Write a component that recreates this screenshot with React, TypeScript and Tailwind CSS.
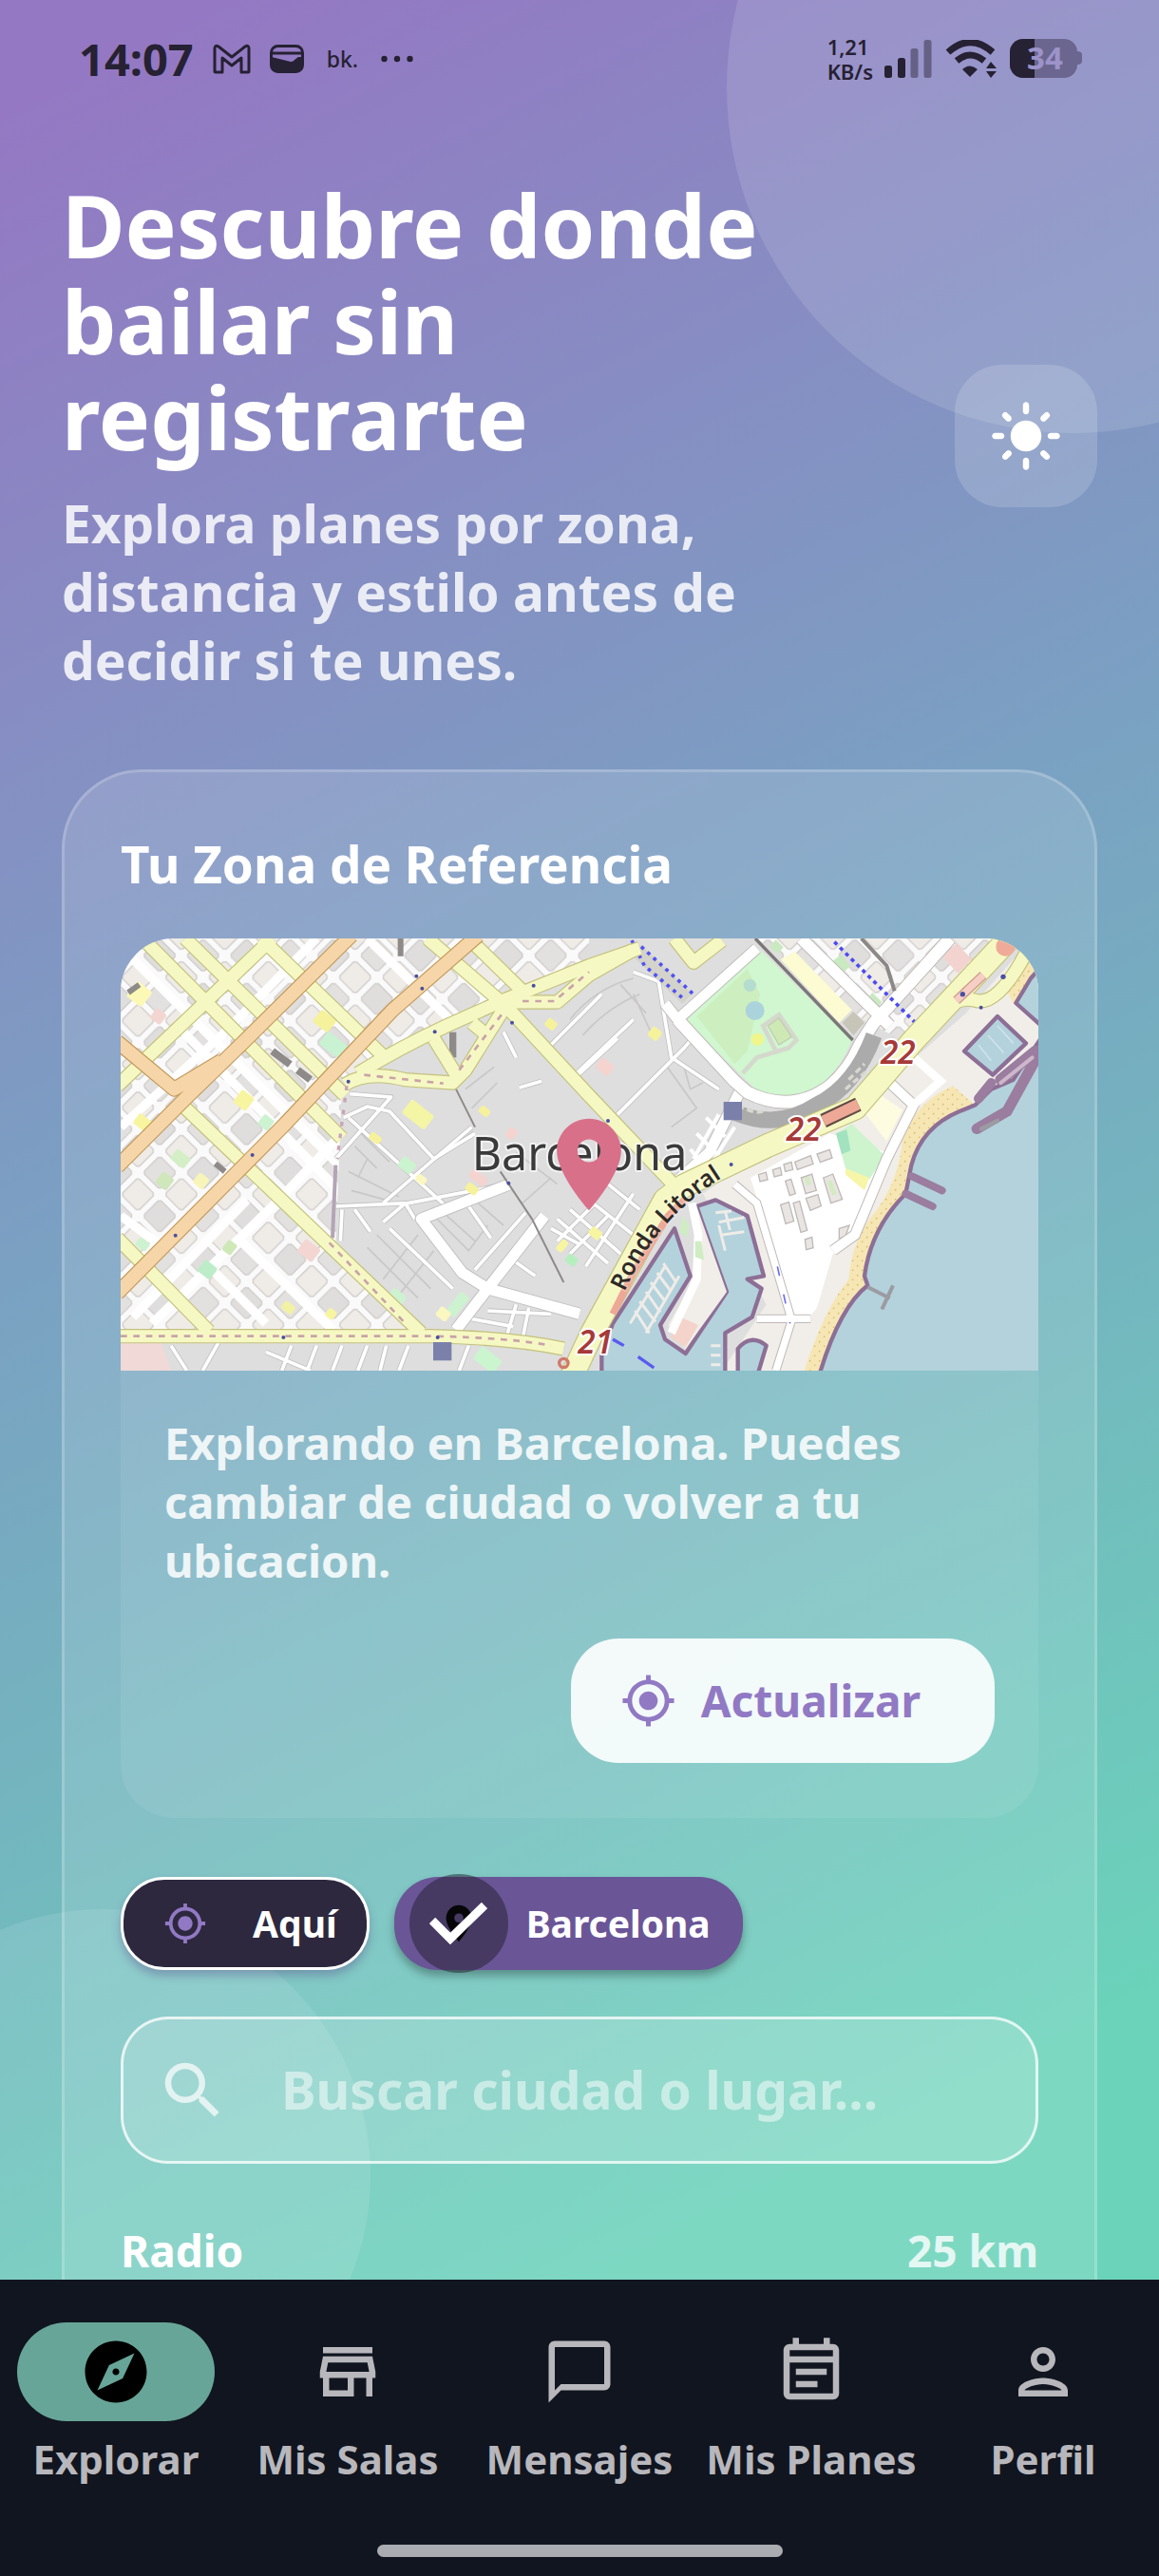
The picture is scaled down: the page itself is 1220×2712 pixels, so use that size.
import { useState } from "react";
import {
  MdExplore,
  MdLightMode,
  MdLocationOn,
  MdMyLocation,
  MdOutlineChatBubbleOutline,
  MdOutlineEventNote,
  MdOutlinePerson,
  MdOutlineStore,
  MdSearch,
} from "react-icons/md";

const navItems = [
  { label: "Explorar", Icon: MdExplore },
  { label: "Mis Salas", Icon: MdOutlineStore },
  { label: "Mensajes", Icon: MdOutlineChatBubbleOutline },
  { label: "Mis Planes", Icon: MdOutlineEventNote },
  { label: "Perfil", Icon: MdOutlinePerson },
];

function StatusBar() {
  return (
    <div className="flex h-[124px] items-center justify-between pr-[81px] pl-[83px] text-[#262133]">
      <div className="flex items-center">
        <span className="text-[47px] leading-none font-bold">14:07</span>
        <svg className="ml-5 h-[32px] w-[40px]" viewBox="0 0 40 32" fill="none" stroke="currentColor" strokeWidth="3" strokeLinejoin="round">
          <path d="M2 29V5q0-4 4-2l14 11L34 3q4-2 4 2v24q0 1-1 1h-7V15L20 23 10 15v15H3q-1 0-1-1z" />
        </svg>
        <svg className="ml-5 h-[30px] w-[36px]" viewBox="0 0 36 30" fill="none">
          <rect x="1.500" y="1.500" width="33" height="27" rx="7" stroke="currentColor" strokeWidth="3" />
          <path d="M2 9h32" stroke="currentColor" strokeWidth="3" />
          <path d="M2 13l20 5q3 0 4-2l4-3h4v11q0 4-4 4H6q-4 0-4-4z" fill="currentColor" />
        </svg>
        <span className="ml-6 text-[23px] leading-none font-medium">bk.</span>
        <svg className="ml-6 h-[8px] w-[34px]" viewBox="0 0 34 8" fill="currentColor">
          <circle cx="3.500" cy="4" r="3.200" />
          <circle cx="17" cy="4" r="3.200" />
          <circle cx="30.500" cy="4" r="3.200" />
        </svg>
      </div>
      <div className="flex items-center">
        <div className="text-[22px] leading-[26px] font-semibold">
          <div>1,21</div>
          <div>KB/s</div>
        </div>
        <svg className="ml-3 h-[40px] w-[50px]" viewBox="0 0 50 40" fill="currentColor">
          <rect x="0" y="27" width="8" height="13" rx="2.500" />
          <rect x="14" y="19" width="8" height="21" rx="2.500" />
          <rect x="27.500" y="9" width="8" height="31" rx="2.500" opacity="0.450" />
          <rect x="41.500" y="0" width="8" height="40" rx="2.500" opacity="0.450" />
        </svg>
        <svg className="ml-3.5 h-[40px] w-[54px]" viewBox="0 0 54 40" fill="none">
          <path d="M3 13Q26-8 50 13" stroke="currentColor" strokeWidth="7" />
          <path d="M12 22Q26 10 41 22" stroke="currentColor" strokeWidth="7" />
          <path d="M18 31q8-7 16 0l-8 8z" fill="currentColor" />
          <path d="M43 30l5-7 6 7zM43 33h11l-6 7z" fill="currentColor" />
        </svg>
        <svg className="ml-3.5 h-[42px] w-[76px] overflow-visible" viewBox="0 0 76 42">
          <defs>
            <clipPath id="battery">
              <rect width="71" height="41" rx="14" />
            </clipPath>
          </defs>
          <g clipPath="url(#battery)">
            <rect width="71" height="41" fill="#6b668f" />
            <rect width="26" height="41" fill="#262133" />
          </g>
          <path d="M71 13q5 0 5 4v6q0 4-5 4z" fill="#6b668f" />
          <text x="37" y="32" textAnchor="middle" fontSize="33" fontWeight="700" fill="#9c93c9">34</text>
        </svg>
      </div>
    </div>
  );
}

const yellowRoads = [
  "M90 24L720 655",
  "M225 24L730 520",
  "M465 24L850 395",
  "M10 490L500 24",
  "M210 545L970 1270",
  "M10 970L300 1265",
  "M990 24L1240 240L1500 520L1780 815",
  "M1120 24L1290 190",
  "M770 450Q900 370 1050 300L1240 215L1500 110L1660 55",
  "M730 485Q800 440 920 470L1070 480L1110 440L1235 240",
  "M1240 225H1400L1500 140L1640 60",
  "M1010 340L1090 470",
  "M1130 290L1190 340",
  "M10 1280H1000Q1250 1285 1420 1320",
  "M1770 24L1830 100L1920 30",
  "M2590 290Q2650 200 2720 220T2880 70",
];

const orangeRoads = [
  "M10 350L190 500L340 410",
  "M10 745L235 520L400 360L750 14",
  "M10 1145L540 610L880 250L1150 14",
];

// x, y, width, height, fill of parks, squares and public buildings
const blocks: [number, number, number, number, string][] = [
  [80, 200, 60, 60, "#fbf9b5"],
  [140, 270, 40, 40, "#f3d6d2"],
  [665, 285, 60, 50, "#f6f29b"],
  [705, 370, 110, 50, "#c9f2d3"],
  [410, 535, 50, 50, "#f8f5a0"],
  [480, 605, 40, 40, "#cdf2d0"],
  [90, 605, 50, 40, "#f8f5a0"],
  [210, 720, 55, 40, "#d4efc6"],
  [160, 790, 45, 45, "#d0e6bb"],
  [275, 790, 40, 40, "#f8f5b8"],
  [90, 990, 40, 30, "#cdf2d0"],
  [365, 1000, 35, 40, "#cfe8b8"],
  [615, 1010, 60, 50, "#f3d6d2"],
  [295, 1070, 50, 45, "#bdecc8"],
  [550, 1190, 40, 30, "#f2f2a5"],
  [685, 1210, 30, 30, "#f8f5a0"],
  [960, 580, 90, 55, "#f4f5a5"],
  [925, 740, 50, 40, "#cbf3cf"],
  [970, 785, 35, 25, "#fbf7c0"],
  [1130, 815, 40, 28, "#f6f29b"],
  [825, 655, 40, 25, "#f6f29b"],
  [1380, 295, 35, 30, "#f6f29b"],
  [1170, 570, 35, 25, "#f6f29b"],
  [1255, 640, 30, 35, "#f5d3cf"],
  [1150, 780, 60, 30, "#f5d3cf"],
  [1415, 995, 24, 40, "#f8f5a0"],
  [1445, 1040, 36, 30, "#b5efbe"],
  [1085, 1180, 35, 80, "#cdf2d0"],
  [1040, 1210, 40, 35, "#fbf7c0"],
  [895, 1155, 50, 35, "#cdf2d0"],
  [1180, 1355, 80, 50, "#cbf5cf"],
  [1550, 430, 50, 40, "#f5d3cf"],
  [1708, 325, 36, 36, "#f6f29b"],
  [1520, 955, 40, 30, "#f8f5a0"],
];

const gridAvenues = [
  "M21 620L340 330L640 24",
  "M60 90L560 590L720 750",
  "M200 300L720 830",
  "M800 24L1070 290",
  "M21 900L170 1010",
  "M120 1240L520 850L720 640",
  "M60 1220L420 850",
  "M400 980L690 1260",
  "M300 1060L480 1240",
];

const minorStreets = [
  "M745 515L875 525L700 720",
  "M725 590L800 555L870 570L1010 720L1140 640",
  "M740 590L1060 880",
  "M700 870L930 860L1240 800",
  "M850 860L1000 730L1130 620",
  "M760 880L810 950M850 920L920 860L950 910",
  "M720 880L715 980M870 940L1070 1130",
  "M1120 870L1190 970M1340 940L1090 1250",
  "M1300 890L1140 1070M1260 1040L1330 1090",
  "M1380 360L1540 200M1440 470L1640 280",
  "M1460 460L1590 340M1590 580L1800 370L1860 300",
  "M1280 495L1350 475M1230 320L1270 400",
  "M1640 130L1720 160L1760 400L1910 500",
  "M1380 940L1470 990M1400 910L1560 1050M1440 880L1600 1020M1500 850L1640 960M1560 800L1660 880",
  "M1400 980L1520 860M1440 1020L1560 900M1490 1060L1640 830",
  "M180 1310L230 1389M330 1300L280 1389M480 1330L620 1389M560 1310L530 1389M640 1310L610 1389M720 1310L690 1389M800 1310L770 1389M860 1310L840 1389M930 1310L900 1389M1120 1310L1090 1389",
  "M1100 1220L1260 1250M1270 1180L1240 1280M1310 1190L1290 1290M1180 1200L1380 1210",
];

const wideStreets = [
  "M1250 800L970 910L1100 1080L1180 1130L1470 1210",
  "M1360 900L1180 1130L1080 1260",
  "M1990 480L1880 700L1780 790",
];

const alleys = [
  "M760 680L830 750M780 640L870 730M740 760L900 840M750 820L860 850M800 720L770 780",
  "M830 960L1000 1130M800 1000L960 1160M780 1060L900 1180M960 960L850 1100M1010 1010L900 1150",
  "M1010 900L1120 1010L1180 930M1040 890L1140 980M1150 860L1230 930",
  "M1440 280Q1520 180 1640 150M1480 330Q1560 240 1660 200M1600 170L1680 260M1640 200L1700 330",
  "M1740 420L1840 560L1760 620M1800 430L1820 500L1860 480",
  "M1110 500L1200 430M1130 560L1210 480M1270 700L1400 800M1290 860L1380 780",
];

const rondaLitoral = "M1440 1420L1510 1270L1740 850L1800 805L2060 680L2340 560L2530 340L2830 20";

function CityMap() {
  return (
    <svg className="block w-full" viewBox="21 24 2898 1365" role="img" aria-label="Barcelona">
      <defs>
        <pattern id="blocks" width="194" height="194" patternUnits="userSpaceOnUse" patternTransform="translate(350 215) rotate(45)">
          <rect width="194" height="194" fill="#fbfafa" />
          <g stroke="#cfcccb" strokeWidth="4">
            <path d="M18 11h61l7 7v61l-7 7H18l-7-7V18z" fill="#efebe6" />
            <path d="M115 11h61l7 7v61l-7 7h-61l-7-7V18z" fill="#dfdedd" />
            <path d="M18 108h61l7 7v61l-7 7H18l-7-7v-61z" fill="#e3e1df" />
            <path d="M115 108h61l7 7v61l-7 7h-61l-7-7v-61z" fill="#efebe6" />
          </g>
        </pattern>
        <pattern id="dots" width="30" height="30" patternUnits="userSpaceOnUse">
          <rect width="30" height="30" fill="#f6e6b4" />
          <circle cx="8" cy="8" r="2.500" fill="#d9b96e" />
          <circle cx="23" cy="22" r="2.500" fill="#d9b96e" />
        </pattern>
        <clipPath id="eixample">
          <path d="M21 24H1500V100L1240 215L850 395L720 490L700 980L960 1270H21z" />
        </clipPath>
      </defs>
      <rect x="21" y="24" width="2898" height="1365" fill="#dedede" />
      <g clipPath="url(#eixample)">
        <rect x="21" y="24" width="1500" height="1260" fill="url(#blocks)" />
        <g fill="none" stroke="#ffffff" strokeWidth="28">
          {gridAvenues.map((d) => <path key={d} d={d} />)}
        </g>
      </g>
      <path d="M2030 24H2830L2480 340L2380 290z" fill="url(#blocks)" />
      <path d="M21 1300H150L180 1389H21z" fill="#f0d9d7" />

      <g fill="none" stroke="#c9c7c7" strokeWidth="5">
        {alleys.map((d) => <path key={d} d={d} />)}
      </g>
      <g fill="none" strokeLinejoin="round">
        {minorStreets.map((d) => <path key={d} d={d} stroke="#c2c0c0" strokeWidth="16" />)}
        {minorStreets.map((d) => <path key={d + "f"} d={d} stroke="#ffffff" strokeWidth="11" />)}
        {wideStreets.map((d) => <path key={d} d={d} stroke="#c2c0c0" strokeWidth="40" />)}
        {wideStreets.map((d) => <path key={d + "f"} d={d} stroke="#ffffff" strokeWidth="34" />)}
      </g>
      {blocks.map(([x, y, w, h, fill]) => (
        <rect key={`${x}-${y}`} x={x - w / 2} y={y - h / 2} width={w} height={h} rx="8" fill={fill} transform={`rotate(38 ${x} ${y})`} />
      ))}
      <g fill="none" stroke="#8e8a8a">
        <path d="M500 380L620 470" strokeWidth="24" strokeDasharray="70 30" />
        <path d="M1070 320V400" strokeWidth="22" />
        <path d="M45 195L80 170M320 735L350 760" strokeWidth="18" />
        <path d="M905 24V80" strokeWidth="18" />
        <path d="M1080 500L1140 620M1220 760L1320 910L1420 1110" strokeWidth="6" />
        <path d="M700 740L690 970" stroke="#b3a5b5" strokeWidth="12" />
      </g>

      {/* east side: park, railway and the coast */}
      <g transform="translate(1440 0)">
        <path d="M420 830L620 690L1000 480L1250 260L1400 90L1479 60V1389H480L620 1180z" fill="#f1eee9" />
        <path d="M1210 490Q1090 540 1050 660Q1040 780 970 880Q890 970 880 1100Q800 1200 740 1389H860L1000 1000L1290 560z" fill="url(#dots)" />
        <path d="M1430 60L1370 170L1400 230L1479 110V50z" fill="url(#dots)" />
        <path d="M570 780L820 640L1000 700L890 980L830 1020L780 1190L740 1240L690 1230L640 1000z" fill="#ffffff" />
        <g fill="#e9e5e3" stroke="#bfbab8" strokeWidth="4">
          <path d="M595 770l24-8 5 24-24 6zM640 755l24-8 5 24-24 6zM675 738l24-8 5 24-24 6zM710 730l50-20 8 26-50 18zM780 705l40-14 8 26-38 14z" />
          <path d="M730 780l34-12 14 52-34 10zM800 780l30-12 30 80-36 12zM680 790l18-6 14 46-18 6zM745 845l38-12 10 36-34 14zM665 865l26-8 16 60-26 8z" />
          <path d="M705 860l20-6 24 92-20 6zM742 975l22-8 4 34-22 6zM850 940l32-10-12 34-20 8z" />
        </g>
        <path d="M740 780l14-5 8 26-14 4zM812 792l14-5 16 44-14 5z" fill="#d3ebc0" />
        <path d="M840 640L890 610L995 710L945 785L870 750z" fill="#cdf4cd" />
        <path d="M840 640l34-12 12 66-28 12z" fill="#a3e2bf" />
        <path d="M870 750L945 780L930 820L870 770z" fill="#f7f5a8" />
        <path d="M920 560L975 515L1050 565L1000 665z" fill="#fdfbe0" />

        <g stroke="#8d6f96" strokeWidth="13" strokeLinejoin="round" fill="#b3d2dc">
          <path d="M1500 320L1400 470L1330 500L1280 550L1230 570Q1110 620 1078 740L1060 830Q950 940 930 1090L940 1120Q850 1190 785 1410H1500z" />
          <path d="M1500 100L1455 150L1408 228L1500 310z" />
          <path d="M1350 270L1440 355L1335 455L1245 380z" />
          <path d="M330 940L380 1090L285 1245L300 1290L365 1335L495 1140L400 870L460 850L560 900L612 1090L560 1100L605 1130L575 1220L490 1270V1410H100V1340L135 1240z" />
          <path d="M530 1410V1320Q570 1270 620 1310L590 1410z" />
        </g>
        <path d="M310 1245L405 1080L400 870L495 1140L365 1320z" fill="#f1eee9" />
        <path d="M350 1220L405 1245L365 1315L318 1285z" fill="#f4d3cb" />
        <path d="M385 860L405 960L400 1100L320 1270" fill="none" stroke="#ffffff" strokeWidth="26" />
        <path d="M355 900l22 30-8 40-24-20zM395 980l20 0 8 60-28-10z" fill="#d0ecc4" />
        <g fill="none" stroke="#9a7d9f" strokeLinecap="round">
          <path d="M1479 390L1380 570L1285 625" strokeWidth="34" />
          <path d="M1470 380L1360 470" strokeWidth="36" />
          <path d="M1080 775L1175 820M1060 830L1145 870" strokeWidth="24" />
          <path d="M1330 480L1290 530" strokeWidth="30" />
          <path d="M1360 480L1460 400" stroke="#cdb7cb" strokeWidth="12" />
          <path d="M1300 625L1350 600" stroke="#9c9ba2" strokeWidth="14" />
        </g>
        <g fill="none" stroke="#efece8" strokeWidth="9">
          <path d="M460 890l50-5M470 920l80-15M480 960l70-10M490 885l15 60M470 930l20 80" />
          <path d="M295 1050l40 60M275 1080l45 60M255 1110l45 60M240 1140l45 65M220 1170l50 65M205 1200l45 70M300 1060L190 1240M345 1090L240 1270" />
          <path d="M445 1310h30M445 1340h30M445 1370h30" />
        </g>
        <path d="M1290 360L1330 410M1320 330L1370 385M1350 300L1400 355" stroke="#cfe2ea" strokeWidth="5" />
        <path d="M940 1125L1010 1160M1020 1120L985 1195" stroke="#9c9ba2" strokeWidth="12" />

        <g fill="none">
          <path d="M1010 480L1085 550L1000 720L900 960L830 1010" stroke="#bfbab8" strokeWidth="36" />
          <path d="M1010 480L1085 550L1000 720L900 960L830 1010" stroke="#ffffff" strokeWidth="30" />
          <path d="M1075 390L1170 475L1085 550" stroke="#ffffff" strokeWidth="26" />
          <path d="M520 800L590 860L700 1230L650 1389M590 1225H760" stroke="#bfbab8" strokeWidth="28" />
          <path d="M520 800L590 860L700 1230L650 1389M590 1225H760" stroke="#ffffff" strokeWidth="22" />
          <path d="M655 1060L695 1240" stroke="#6c6cf0" strokeWidth="5" strokeDasharray="30 60" />
          <path d="M135 1290L170 1310M215 1345L265 1380" stroke="#5a5af0" strokeWidth="10" />
        </g>

        <path d="M365 285L600 60L890 345Q850 450 770 500Q680 540 590 505L535 450z" fill="#d0f7cf" />
        <path d="M400 270L560 120L600 200L560 380L520 420z" fill="#cdeebf" />
        <path d="M545 450L590 400L690 370L715 345L660 265L610 300L650 380" fill="none" stroke="#d5d8cd" strokeWidth="14" />
        <path d="M625 300L660 275L700 335L660 360z" fill="#cfe9b4" stroke="#c1ccb5" strokeWidth="4" />
        <circle cx="584" cy="252" r="30" fill="#abd3dc" />
        <circle cx="568" cy="172" r="20" fill="#b4dccf" />
        <circle cx="592" cy="343" r="20" fill="#f0f58c" />
        <path d="M665 90L710 65L890 250L850 290z" fill="#fdfbd2" />
        <path d="M860 290L895 255L930 290L895 330z" fill="#c6c5b8" />
        <path d="M1175 80L1220 40L1270 90L1225 135z" fill="#f3d3d0" />
        <path d="M825 100l30-25 30 35-30 30zM935 220l20-25 30 30-20 28zM630 50l20-22 24 24-18 20z" fill="#c9eac0" />
        <g fill="none" strokeLinejoin="round">
          <path d="M730 24L1010 300M1200 24L960 290" stroke="#bfbab8" strokeWidth="42" />
          <path d="M340 280L520 475L560 510Q700 580 820 490Q880 440 915 360L960 290L1200 24" stroke="#bfbab8" strokeWidth="44" />
          <path d="M590 55L340 280L300 230" stroke="#bfbab8" strokeWidth="38" />
          <path d="M730 24L1010 300M1200 24L960 290" stroke="#ffffff" strokeWidth="36" />
          <path d="M340 280L520 475L560 510Q700 580 820 490Q880 440 915 360L960 290L1200 24" stroke="#ffffff" strokeWidth="38" />
          <path d="M590 55L340 280L300 230" stroke="#ffffff" strokeWidth="32" />
          <path d="M585 24L893 345" stroke="#7b7777" strokeWidth="10" />
          <path d="M920 24L1000 110L1025 190" stroke="#8c8888" strokeWidth="12" />
          <path d="M525 575Q660 630 780 550Q900 490 960 330" stroke="#ababab" strokeWidth="52" />
          <path d="M530 550Q600 590 620 560M870 500L940 440M880 470L930 420" stroke="#d8d8d0" strokeWidth="10" strokeDasharray="20 12" />
          <path d="M210 60L370 215" stroke="#d3d3cb" strokeWidth="44" />
          <path d="M195 30L235 110L365 220M225 50L390 200" stroke="#5151f2" strokeWidth="11" strokeDasharray="11 15" />
          <path d="M835 35L1090 290" stroke="#4b4bf0" strokeWidth="11" strokeDasharray="12 13" />
        </g>
        <g fill="none" stroke="#ffffff" strokeWidth="12">
          <path d="M430 590L490 650M400 640L480 720M470 580L390 720M520 620L430 760M380 690L450 770" />
        </g>
      </g>

      <g fill="none" strokeLinejoin="round">
        {yellowRoads.map((d) => <path key={d} d={d} stroke="#c3c27c" strokeWidth="46" />)}
        <path d={rondaLitoral} stroke="#c3c27c" strokeWidth="78" />
        {yellowRoads.map((d) => <path key={d + "f"} d={d} stroke="#f6f8c4" strokeWidth="39" />)}
        <path d={rondaLitoral} stroke="#f6f8c4" strokeWidth="71" />
        {orangeRoads.map((d) => <path key={d} d={d} stroke="#c29a5c" strokeWidth="48" />)}
        {orangeRoads.map((d) => <path key={d + "f"} d={d} stroke="#f6d6a8" strokeWidth="41" />)}
        <path d="M21 1280H1000Q1250 1285 1380 1310M680 985L920 1240M790 455L1040 482M1090 440L1235 250M1290 222H1390L1500 130" stroke="#c9a3a8" strokeWidth="8" strokeDasharray="20 20" />
        <path d="M735 490L705 720" stroke="#c9a3b8" strokeWidth="10" strokeDasharray="14 24" />
        <path d="M2240 600L2350 548" stroke="#5f4a44" strokeWidth="46" />
        <path d="M2240 600L2350 548" stroke="#eda896" strokeWidth="34" />
        <path d="M1575 1210L1640 1080L1750 900L1800 850" stroke="#eda896" strokeWidth="22" />
        <path d="M2660 220L2745 140" stroke="#cf9a8e" strokeWidth="30" />
        <path d="M2660 220L2745 140" stroke="#f5cfc4" strokeWidth="22" />
      </g>
      <circle cx="2815" cy="50" r="30" fill="#f0ab98" />
      <circle cx="1420" cy="1365" r="14" fill="none" stroke="#d07a6c" strokeWidth="10" />
      <g fill="#4a4fa0">
        <circle cx="437" cy="708" r="6" />
        <circle cx="194" cy="962" r="6" />
        <circle cx="973" cy="182" r="6" />
        <circle cx="955" cy="143" r="6" />
        <circle cx="740" cy="476" r="6" />
        <circle cx="1325" cy="173" r="6" />
        <circle cx="1257" cy="290" r="6" />
        <circle cx="1013" cy="319" r="6" />
        <circle cx="1246" cy="797" r="6" />
        <circle cx="1560" cy="600" r="6" />
        <circle cx="1949" cy="738" r="6" />
        <circle cx="535" cy="1284" r="6" />
        <circle cx="1022" cy="1284" r="6" />
        <circle cx="2680" cy="200" r="8" />
        <circle cx="2808" cy="145" r="8" />
        <circle cx="2738" cy="242" r="6" />
      </g>
      <g fill="#7b80ab">
        <rect x="1008" y="1299" width="58" height="58" />
        <rect x="1925" y="540" width="58" height="58" />
      </g>
      <g stroke="#ffffff" strokeWidth="12" strokeLinejoin="round" paintOrder="stroke">
        <text x="1470" y="757" textAnchor="middle" fontSize="145" fill="#3a3a3a" strokeOpacity="0.600">Barcelona</text>
        <g fill="#a63a38" fontSize="100" fontWeight="600" fontStyle="italic">
          <text x="2476" y="420" textAnchor="middle">22</text>
          <text x="2178" y="662" textAnchor="middle">22</text>
          <text x="1520" y="1336" textAnchor="middle">21</text>
        </g>
        <path id="ronda" d="M1612 1140Q1690 970 1790 880T1990 740" fill="none" stroke="none" />
        <text fontSize="74" fontWeight="600" fill="#2e2a26" strokeOpacity="0.200">
          <textPath href="#ronda">Ronda Litoral</textPath>
        </text>
      </g>
    </svg>
  );
}

export default function App() {
  const [place, setPlace] = useState("barcelona");
  const [tab, setTab] = useState("Explorar");

  return (
    <div className="flex h-screen flex-col overflow-hidden font-['Noto_Sans',sans-serif] font-bold">
      <div className="relative isolate min-h-0 flex-1 overflow-hidden bg-[linear-gradient(153deg,#9478c3_4%,#7aa1c2_45%,#6bd3ba_90%)]">
        <div className="absolute -top-[272px] -right-[273px] -z-10 size-[728px] rounded-full bg-white/12" />
        <div className="absolute -bottom-[172px] -left-[172px] -z-10 size-[562px] rounded-full bg-white/10" />

        <StatusBar />

        <main className="px-[65px] pt-[63px]">
          <header className="flex items-center justify-between gap-10">
            <div className="max-w-[760px]">
              <h1 className="text-[91px] leading-[101px] text-white">Descubre donde bailar sin registrarte</h1>
              <p className="mt-[25px] text-[55px] leading-[72px] text-white/83">
                Explora planes por zona, distancia y estilo antes de decidir si te unes.
              </p>
            </div>
            <button type="button" aria-label="Tema claro" className="flex size-[150px] shrink-0 items-center justify-center rounded-[50px] bg-white/16 text-white">
              <MdLightMode className="size-[78px]" />
            </button>
          </header>

          <section className="mt-[79px] rounded-[84px] border-3 border-white/20 bg-white/12 px-[59px] pt-[61px] pb-32">
            <h2 className="text-[53px] leading-[72px] text-white">Tu Zona de Referencia</h2>

            <div className="mt-[42px] overflow-hidden rounded-[56px] bg-white/7">
              <div className="relative font-normal">
                <CityMap />
                <MdLocationOn className="absolute top-1/2 left-[51%] size-[116px] -translate-x-1/2 -translate-y-[48px] text-[#d9708a]" />
              </div>
              <div className="px-[46px] pt-[45px] pb-[58px]">
                <p className="text-[47px] leading-[62px] text-white/85">
                  Explorando en Barcelona. Puedes cambiar de ciudad o volver a tu ubicacion.
                </p>
                <div className="mt-[51px] flex justify-end">
                  <button type="button" className="flex h-[131px] items-center gap-[26px] rounded-[50px] bg-white/90 pr-[78px] pl-[52px] text-[46px] text-[#9179c4]">
                    <MdMyLocation className="size-[59px]" />
                    Actualizar
                  </button>
                </div>
              </div>
            </div>

            <div className="mt-[62px] flex gap-[26px] text-[39px] text-white">
              <button
                type="button"
                aria-pressed={place === "aqui"}
                onClick={() => setPlace("aqui")}
                className="flex h-[98px] items-center gap-[48px] rounded-[46px] border-3 border-white bg-[#2d283e] pr-[31px] pl-[42px] shadow-[0_6px_10px_rgba(90,80,140,0.4)]"
              >
                <MdMyLocation className="size-[46px] text-[#9179c4]" />
                Aquí
              </button>
              <button
                type="button"
                aria-pressed={place === "barcelona"}
                onClick={() => setPlace("barcelona")}
                className="flex h-[98px] items-center gap-[19px] rounded-[46px] bg-[#6a5597] pr-[34px] pl-[16px] shadow-[0_6px_10px_rgba(0,0,0,0.3)]"
              >
                <span className="relative flex size-[104px] items-center justify-center rounded-full bg-[#211f2f]/50">
                  <MdLocationOn className="size-[46px] text-[#060608]" />
                  <svg className="absolute h-[44px] w-[61px]" viewBox="0 0 61 44" fill="none" stroke="#ffffff" strokeWidth="9">
                    <path d="M3 19l19 19L58 3" />
                  </svg>
                </span>
                Barcelona
              </button>
            </div>

            <label className="mt-[49px] flex h-[155px] items-center rounded-[50px] border-3 border-white/75 bg-white/16 pl-[34px]">
              <MdSearch className="size-[78px] shrink-0 text-white/70" />
              <input
                type="text"
                aria-label="Buscar ciudad o lugar"
                placeholder="Buscar ciudad o lugar..."
                className="ml-[54px] min-w-0 flex-1 bg-transparent text-[55px] text-white outline-none placeholder:text-white/50"
              />
            </label>

            <div className="mt-[60px] flex justify-between text-[46px] leading-[62px]">
              <span className="text-white">Radio</span>
              <span className="text-white/80">25 km</span>
            </div>
          </section>
        </main>
      </div>

      <nav className="shrink-0 bg-[#11151f] pt-[45px] pb-5">
        <div className="grid grid-cols-5">
          {navItems.map(({ label, Icon }) => (
            <button
              key={label}
              type="button"
              aria-current={tab === label ? "page" : undefined}
              onClick={() => setTab(label)}
              className="flex flex-col items-center text-[#b7b7bc]"
            >
              <span className={tab === label ? "flex h-[104px] w-[208px] items-center justify-center rounded-full bg-[#67a598] text-black" : "flex h-[104px] w-[208px] items-center justify-center"}>
                <Icon className="size-[78px]" />
              </span>
              <span className="mt-3 text-[42px] leading-[56px] whitespace-nowrap">{label}</span>
            </button>
          ))}
        </div>
        <div className="mx-auto mt-[62px] h-[13px] w-[35%] rounded-full bg-[#abacb1]" />
      </nav>
    </div>
  );
}
